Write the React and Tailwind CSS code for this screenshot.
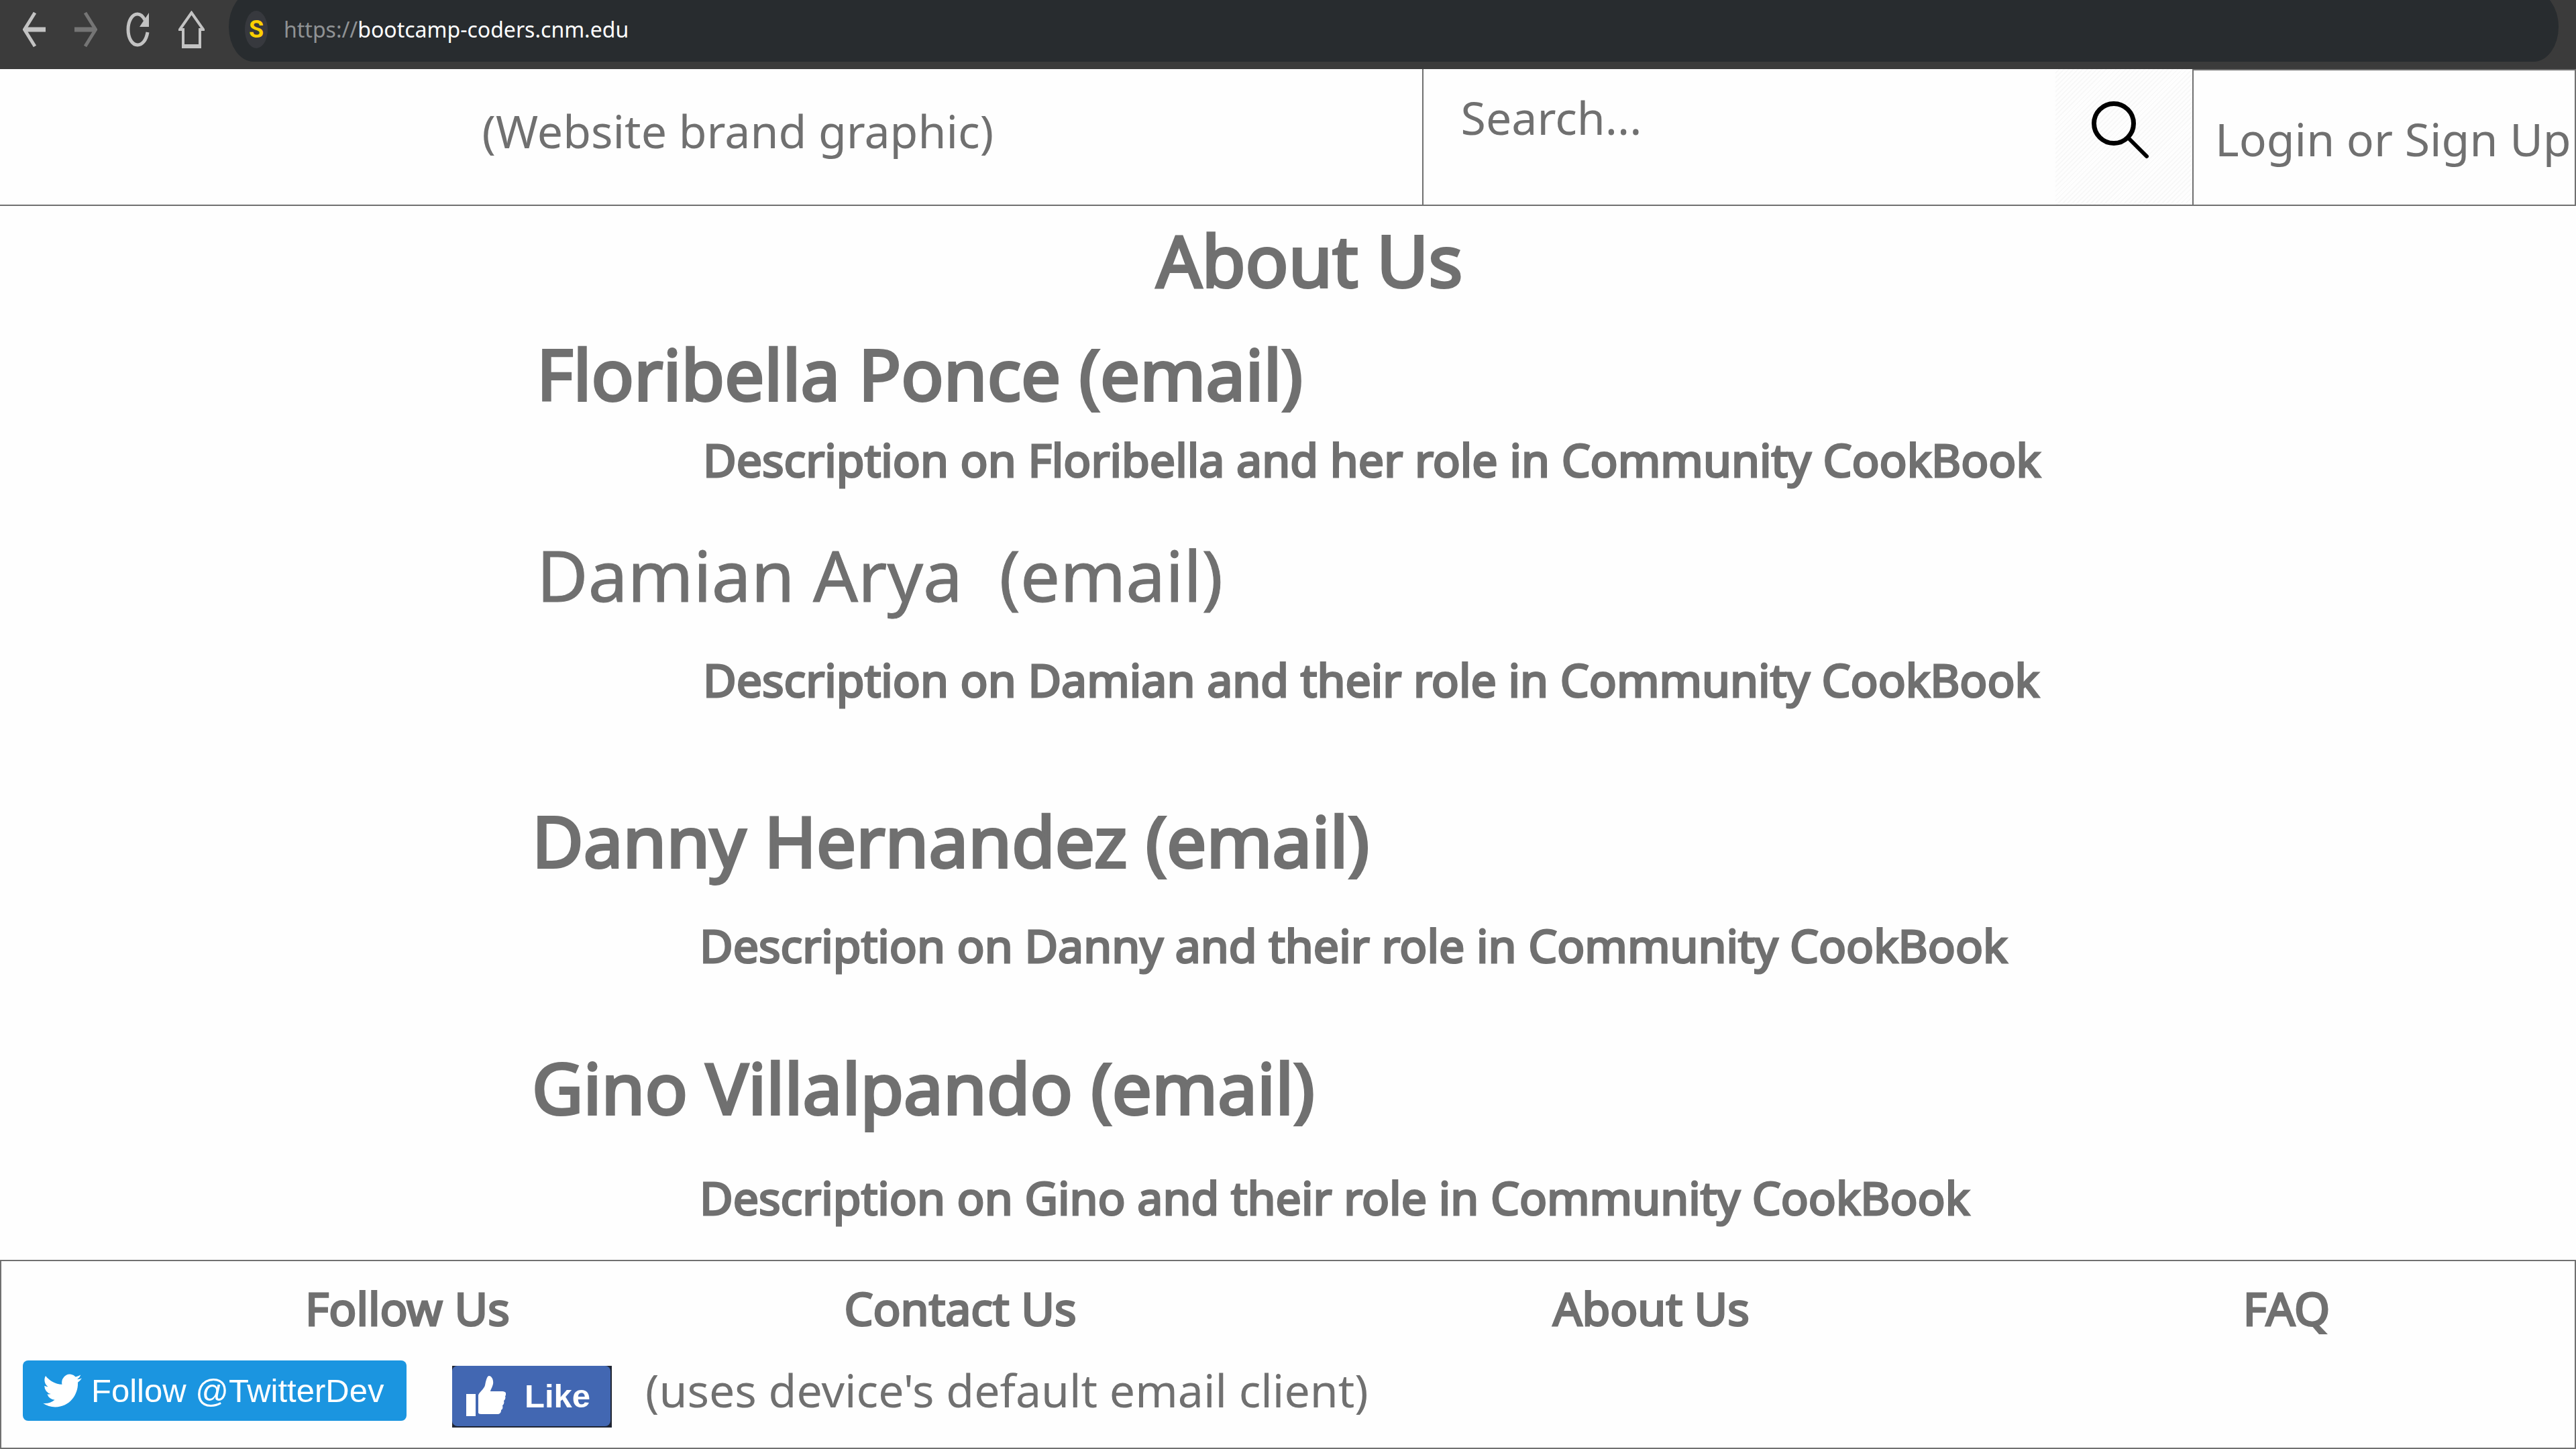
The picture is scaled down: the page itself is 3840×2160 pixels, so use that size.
const people = [
  {
    name: "Floribella Ponce (email)",
    text: "Description on Floribella and her role in Community CookBook",
    item: "pt-[50px]",
    heading: "ml-[800px] [-webkit-text-stroke:4px_#707070]",
    body: "mt-7 ml-[1048px]",
  },
  {
    name: "Damian Arya\u00a0 (email)",
    text: "Description on Damian and their role in Community CookBook",
    item: "pt-[72px]",
    heading: "ml-[800px] [-webkit-text-stroke:1px_#707070]",
    body: "mt-14 ml-[1048px]",
  },
  {
    name: "Danny Hernandez (email)",
    text: "Description on Danny and their role in Community CookBook",
    item: "pt-[140px]",
    heading: "ml-[793px] [-webkit-text-stroke:4px_#707070]",
    body: "mt-14 ml-[1043px]",
  },
  {
    name: "Gino Villalpando (email)",
    text: "Description on Gino and their role in Community CookBook",
    item: "pt-[112px]",
    heading: "ml-[793px] [-webkit-text-stroke:4px_#707070]",
    body: "mt-16 ml-[1043px]",
  },
];

function BrowserBar() {
  return (
    <div className="flex items-start overflow-hidden bg-[#3b3b3b] pb-[11px] pl-[34px] pr-[26px]">
      <nav className="flex gap-[43px] pt-4 text-[#c3c3c3]" aria-label="Browser">
        <button type="button" aria-label="Back">
          <svg width="34" height="56" viewBox="0 0 34 56" fill="none" stroke="currentColor">
            <path d="M18 3 2.5 28 18 53" strokeWidth="5" />
            <path d="M2 28h32" strokeWidth="7" />
          </svg>
        </button>
        <button type="button" aria-label="Forward" className="text-[#757575]">
          <svg width="34" height="56" viewBox="0 0 34 56" fill="none" stroke="currentColor">
            <path d="M16 3 31.500 28 16 53" strokeWidth="5" />
            <path d="M0 28h32" strokeWidth="7" />
          </svg>
        </button>
        <button type="button" aria-label="Reload">
          <svg width="35" height="56" viewBox="0 0 35 56" fill="none" stroke="currentColor">
            <path d="M28 14C25 8 21 5 17 5 9 5 3 15 3 28s6 23 14 23c7 0 13-7 15-19" strokeWidth="5" />
            <path d="M34 3v21H20z" fill="currentColor" stroke="none" />
          </svg>
        </button>
        <button type="button" aria-label="Home">
          <svg width="39" height="56" viewBox="0 0 39 56" fill="none" stroke="currentColor">
            <path d="M19.500 3 2 28h5v25h25V28h5z" strokeWidth="4" />
            <path d="M5 53h29" strokeWidth="6" />
          </svg>
        </button>
      </nav>
      <div className="-mt-3 ml-9 flex flex-1 items-center gap-6 rounded-[40px/56px] bg-[#282c2f] pb-5 pl-6 pt-7">
        <span className="flex h-14 w-[34px] items-center justify-center rounded-[50%] bg-[#37393e] font-['Roboto',sans-serif] text-[36px] font-bold leading-[56px] text-[#fdd000]">
          S
        </span>
        <p className="text-[32px] leading-[56px] text-white">
          <span className="text-[#8f9294]">https://</span>bootcamp-coders.cnm.edu
        </p>
      </div>
    </div>
  );
}

function Header() {
  return (
    <header className="flex border-b-2 border-[#707070]">
      <p className="w-[55.25%] shrink-0 border-r-2 border-[#707070] pb-[70px] pl-20 pt-[52px] text-center">
        (Website brand graphic)
      </p>
      <form className="flex min-w-0 flex-1" role="search" onSubmit={(e) => e.preventDefault()}>
        <input
          type="search"
          aria-label="Search"
          placeholder="Search..."
          className="mt-8 h-20 min-w-0 flex-1 bg-transparent pl-14 outline-none placeholder:text-[#707070] placeholder:opacity-100"
        />
        <button
          type="submit"
          aria-label="Submit search"
          className="flex w-[204px] shrink-0 items-start bg-[repeating-linear-gradient(135deg,#fefefe_0_3px,#f8f8f8_3px_5px)] pl-[54px] pt-12"
        >
          <svg width="88" height="88" viewBox="0 0 88 88" fill="none" stroke="#000">
            <circle cx="33" cy="33" r="29.500" strokeWidth="7" />
            <path d="M55 55 82 82" strokeWidth="6" strokeLinecap="round" />
          </svg>
        </button>
      </form>
      <a
        href="#login"
        className="w-[572px] shrink-0 whitespace-nowrap border-2 border-b-0 border-[#707070] pl-8 pt-[62px]"
      >
        Login or Sign Up
      </a>
    </header>
  );
}

function Footer() {
  return (
    <footer className="border-2 border-[#707070] pb-[30px] pt-[30px]">
      <nav
        aria-label="Footer"
        className="grid grid-cols-[1212fr_438fr_1624fr_272fr_294fr] text-center [-webkit-text-stroke:3px_#707070]"
      >
        <a href="#follow">Follow Us</a>
        <a href="#contact">Contact Us</a>
        <a href="#about">About Us</a>
        <a href="#faq">FAQ</a>
      </nav>
      <div className="flex items-start pl-8 pt-[38px] font-['Liberation_Sans',Arial,sans-serif] text-[49px] leading-[90px] text-white">
        <button type="button" className="flex w-[572px] items-center gap-3.5 rounded-lg bg-[#1b95e0] pl-[30px]">
          <svg width="58" height="50" viewBox="0 0 24 20" preserveAspectRatio="none" fill="currentColor" className="shrink-0">
            <path d="M23.950 2.570a10 10 0 0 1-2.820.770 4.960 4.960 0 0 0 2.160-2.720c-.950.550-2 .950-3.120 1.180a4.920 4.920 0 0 0-8.390 4.480C7.690 6.090 4.070 4.130 1.640 1.160a4.820 4.820 0 0 0-.670 2.480c0 1.710.870 3.210 2.190 4.100a4.900 4.900 0 0 1-2.230-.620v.060a4.920 4.920 0 0 0 3.950 4.830 5 5 0 0 1-2.210.080 4.940 4.940 0 0 0 4.600 3.420A9.870 9.870 0 0 1 0 17.540 14 14 0 0 0 7.550 19.750c9.050 0 14-7.500 14-13.980 0-.210 0-.420-.020-.630a9.940 9.940 0 0 0 2.420-2.570z" />
          </svg>
          <span className="whitespace-nowrap">Follow @TwitterDev</span>
        </button>
        <div className="ml-[68px] mt-2 bg-[#1f2533]">
          <button type="button" className="mb-0.5 mr-0.5 flex w-[236px] items-center gap-[28px] rounded-lg bg-[#4267b2] pl-5 font-bold">
            <svg width="60" height="60" viewBox="0 0 60 60" fill="currentColor" className="shrink-0">
              <path d="M1 27h14v33H1z" />
              <path d="M19 55V29c0-3 9-10 10-15 1-6 3-14 6-14 4 0 7 6 6 12-1 5-4 9-4 11h18c5 0 7 4 4 7 1 3 0 6-2 7 1 3 0 6-2 7 1 4 0 6-2 7 0 4-2 6-6 6H23c-2 0-4-1-4-2z" />
            </svg>
            Like
          </button>
        </div>
        <p className="ml-[50px] mt-1 font-['Noto_Sans','Open_Sans',sans-serif] text-[68px] leading-[80px] text-[#707070]">
          (uses device's default email client)
        </p>
      </div>
    </footer>
  );
}

export default function App() {
  return (
    <div className="flex min-h-screen flex-col bg-[#fefefe] font-['Noto_Sans','Open_Sans',sans-serif] text-[68px] leading-[80px] text-[#707070]">
      <BrowserBar />
      <Header />
      <main className="flex-1 pb-10 pt-5">
        <h1 className="pl-16 text-center text-[106px] leading-[120px] [-webkit-text-stroke:4px_#707070]">
          About Us
        </h1>
        {people.map((p) => (
          <section key={p.name} className={p.item}>
            <h2 className={"text-[105px] leading-[120px] " + p.heading}>{p.name}</h2>
            <p className={"[-webkit-text-stroke:3px_#707070] " + p.body}>{p.text}</p>
          </section>
        ))}
      </main>
      <Footer />
    </div>
  );
}
